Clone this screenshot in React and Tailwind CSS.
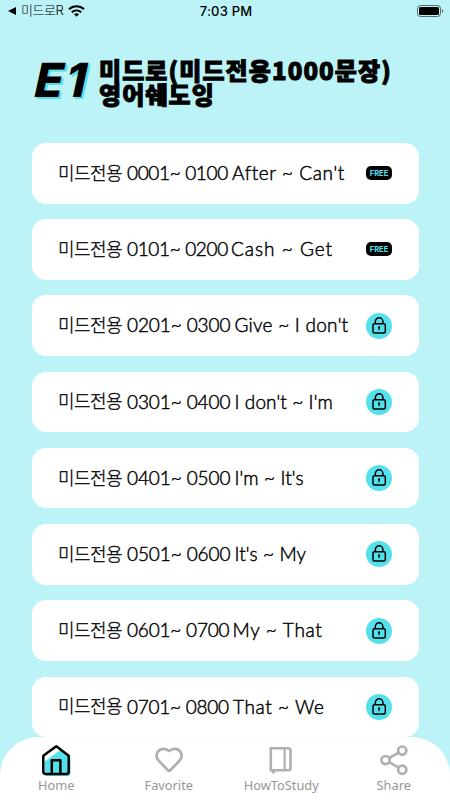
import React from 'react';
import clsx from 'clsx';

const LESSONS = [
  { range: '0001~ 0100', words: "After ~ Can't", free: true, rangeStyle: 'w-[105px] tracking-[-0.35px]', wordStyle: 'tracking-[0.6px]' },
  { range: '0101~ 0200', words: 'Cash ~ Get', free: true, rangeStyle: 'w-[104px] tracking-[-0.35px]', wordStyle: 'tracking-[1px]' },
  { range: '0201~ 0300', words: "Give ~ I don't", rangeStyle: 'w-[107.5px] tracking-[-0.1px]', wordStyle: 'tracking-[0.25px]' },
  { range: '0301~ 0400', words: "I don't ~ I'm", rangeStyle: 'w-[107.5px] tracking-[-0.1px]', wordStyle: 'tracking-[0.1px]' },
  { range: '0401~ 0500', words: "I'm ~ It's", rangeStyle: 'w-[107.5px] tracking-[-0.1px]', wordStyle: 'tracking-[0.1px]' },
  { range: '0501~ 0600', words: "It's ~ My", rangeStyle: 'w-[107.5px] tracking-[-0.1px]', wordStyle: 'tracking-[0.1px]' },
  { range: '0601~ 0700', words: 'My ~ That', rangeStyle: 'w-[105.5px] tracking-[-0.2px]', wordStyle: 'tracking-[0.7px]' },
  { range: '0701~ 0800', words: 'That ~ We', rangeStyle: 'w-[106px] tracking-[-0.25px]', wordStyle: 'tracking-[0.6px]' },
];

const WifiIcon = () => (
  <svg width="17" height="12" viewBox="0 0 17 12" fill="none" stroke="#000" strokeWidth="2">
    <path d="M1 4.2C5.2.2 11.8.2 16 4.2" />
    <path d="M3.8 7.2C6.5 4.8 10.5 4.8 13.2 7.2" />
    <path d="M8.5 11.8 6 9.2Q8.5 7.2 11 9.2Z" fill="#000" stroke="none" />
  </svg>
);

const BatteryIcon = () => (
  <svg width="27" height="12" viewBox="0 0 27 12">
    <rect x="0.5" y="0.5" width="23" height="11" rx="3" fill="none" stroke="#000" strokeOpacity="0.55" />
    <rect x="2" y="2" width="20" height="8" rx="1.5" />
    <path d="M25 4v4c1.6-.6 1.6-3.4 0-4z" fillOpacity="0.6" />
  </svg>
);

const LockIcon = () => (
  <svg width="26" height="26" viewBox="0 0 26 26" fill="none" stroke="#000" strokeWidth="1.5">
    <circle cx="13" cy="13" r="13" fill="#55e1ec" stroke="none" />
    <rect x="7" y="10.8" width="12.3" height="9.2" rx="1.5" />
    <path d="M9.3 10.8V8.6a3.8 3.8 0 0 1 7.6 0v2.2" />
    <circle cx="13.1" cy="14.4" r="1.1" fill="#000" stroke="none" />
    <path d="M13.1 14.5v2.7" strokeWidth="1.1" />
  </svg>
);

const HomeIcon = () => (
  <svg width="32" height="34" viewBox="0 0 32 34" fill="none" stroke="#000" strokeWidth="2.5" strokeLinejoin="round">
    <path d="M5 16 19 5.5l11.500 9V30q0 2-2 2H8Q5 32 5 30z" fill="#55e1ec" stroke="none" />
    <path d="M4 18V12L16 3.500l4 2.800Z" fill="#fff" stroke="none" />
    <path d="M3.300 11.800 16.300 2.300 28.700 11.800V27.500Q28.700 30 26.200 30H5.800Q3.300 30 3.300 27.500Z" />
    <path d="M11.800 30V16.200h8.600V30" />
  </svg>
);

const HeartIcon = () => (
  <svg width="32" height="34" viewBox="0 0 32 34" fill="none" stroke="#b0b0b0" strokeWidth="2.7" strokeLinejoin="round">
    <path d="M16.1 7.100C12.900 4 7.200 3.900 4.600 8C2.800 11.300 3.700 14.600 6 17L14.900 26.200Q16.100 27.400 17.300 26.200L26.200 17C28.500 14.600 29.400 11.300 27.600 8C25 3.900 19.300 4 16.100 7.100Z" />
  </svg>
);

const BookIcon = () => (
  <svg width="32" height="34" viewBox="0 0 32 34" fill="none" stroke="#b0b0b0" strokeWidth="2.6">
    <path d="M5.800 4.300H23.300Q25.500 4.300 25.500 6.500V24Q25.500 26.200 23.300 26.200H5.800Z" />
    <path d="M19.600 4.300v22" strokeWidth="2.2" />
    <path d="M7 27v2.400l1.500-.8 1.500.8V27z" fill="#b0b0b0" strokeWidth="0.5" />
  </svg>
);

const ShareIcon = () => (
  <svg width="32" height="34" viewBox="0 0 32 34" fill="none" stroke="#b0b0b0" strokeWidth="2.7">
    <circle cx="24.200" cy="6.600" r="4.100" />
    <circle cx="7.500" cy="16.100" r="4.100" />
    <circle cx="24.200" cy="25.700" r="4.100" />
    <path d="m11.200 14 9.400-5.400M11.200 18.200l9.400 5.400" />
  </svg>
);

const TABS = [
  { label: 'Home', Icon: HomeIcon },
  { label: 'Favorite', Icon: HeartIcon },
  { label: 'HowToStudy', Icon: BookIcon },
  { label: 'Share', Icon: ShareIcon },
];

const StatusBar = () => (
  <div className="grid h-[22px] grid-cols-3 items-center pr-1.5 pl-2 font-['Inter','Noto_Sans_CJK_KR',sans-serif] text-[13px]">
    <div className="flex items-center">
      <svg width="8" height="8" viewBox="0 0 8 8"><path d="M0 4 8 0v8z" /></svg>
      <span className="ml-[5px] font-light tracking-[-0.5px]">미드로R</span>
      <span className="ml-[5px]"><WifiIcon /></span>
    </div>
    <span className="pt-px text-center font-medium tracking-[0.2px]">7:03 PM</span>
    <div className="flex justify-end"><BatteryIcon /></div>
  </div>
);

const LessonCard = ({ range, words, free, rangeStyle, wordStyle }) => (
  <button className="flex h-[60.5px] w-full shrink-0 items-center rounded-[14px] bg-white px-[26.5px] text-left text-[18px] whitespace-nowrap text-black">
    <span className="w-[69px] pb-[2px] font-['Noto_Sans_CJK_KR',sans-serif] font-light tracking-[-0.6px] [-webkit-text-stroke:0.3px_#000]">미드전용</span>
    <span className={clsx("font-['Lato',sans-serif] text-[19px] font-light [-webkit-text-stroke:0.45px_#000]", rangeStyle)}>{range}</span>
    <span className={clsx("font-['Lato',sans-serif] text-[19px] font-light [-webkit-text-stroke:0.45px_#000]", wordStyle)}>{words}</span>
    <span className="ml-auto">
      {free ? (
        <span className="flex h-[14px] w-[26px] items-center justify-center rounded-[5px] bg-black font-['Inter',sans-serif] text-[7.5px] font-bold text-[#55e1ec]">
          FREE
        </span>
      ) : (
        <LockIcon />
      )}
    </span>
  </button>
);

const App = () => {
  return (
    <div className="flex h-[800px] w-[450px] flex-col overflow-hidden bg-[#bbf3f7] text-black">
      <StatusBar />

      <header className="flex h-[121px] items-start pt-[36px] pl-[35px]">
        <h1 className="w-[64px] -skew-x-3 font-['Inter',sans-serif] text-[47px] leading-[44px] font-extrabold tracking-[2px] italic [text-shadow:2px_2px_0_#55e1ec]">
          E1
        </h1>
        <h2 className="font-['Noto_Sans_CJK_KR',sans-serif] text-[24px] leading-[24px] font-black tracking-[1.1px] whitespace-nowrap [-webkit-text-stroke:1px_#000]">
          <span className="block">미드로(미드전용1000문장)</span>
          <span className="block">영어쉐도잉</span>
        </h2>
      </header>

      <main className="flex h-[595px] flex-col gap-[15.72px] overflow-hidden px-[31.5px]">
        {LESSONS.map((lesson) => (
          <LessonCard key={lesson.range} {...lesson} />
        ))}
      </main>

      <nav className="z-10 -mt-px grid h-[63px] shrink-0 grid-cols-4 rounded-t-[38px] bg-white pt-[7px] shadow-[0_-1px_1px_rgba(0,0,0,0.02)]">
        {TABS.map(({ label, Icon }) => (
          <button key={label} className="flex flex-col items-center font-['Noto_Sans',sans-serif] text-[12.8px] leading-[15px] text-[#969696]">
            <Icon />
            <span>{label}</span>
          </button>
        ))}
      </nav>
    </div>
  );
};

export default App;
